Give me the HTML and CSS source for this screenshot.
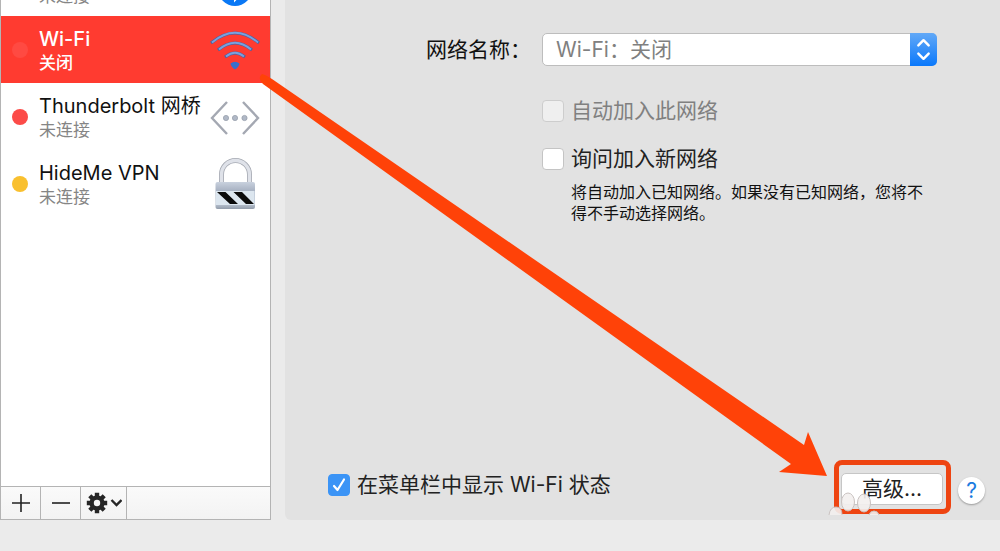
FILE: index.html
```html
<!DOCTYPE html>
<html lang="zh-CN">

<head>
    <meta charset="UTF-8" />
    <meta name="viewport" content="width=device-width, initial-scale=1.0" />
    <title>网络</title>
    <link rel="stylesheet" href="styles.css">
</head>

<body>
    <div class="network">
        <aside class="sidebar">
            <div class="services">
                <ul class="list">
                    <li class="service">
                        <span class="dot red"></span>
                        <div class="info">
                            <div class="name">蓝牙 PAN</div>
                            <div class="status">未连接</div>
                        </div>
                        <svg class="icon" viewBox="0 0 52 52">
                            <circle cx="26" cy="32" r="17" fill="#0a78f5" />
                            <path d="M20 26l12 11-6 6V21l6 6-12 11" fill="none" stroke="#fff" stroke-width="2" />
                        </svg>
                    </li>
                    <li class="service active">
                        <span class="dot off"></span>
                        <div class="info">
                            <div class="name">Wi-Fi</div>
                            <div class="status">关闭</div>
                        </div>
                        <svg class="icon" viewBox="0 0 52 52">
                            <g fill="none" stroke="#4a64a4" stroke-width="3">
                                <path d="M2 19Q26 -1 50 19" />
                                <path d="M9 26Q26 12 43 26" />
                                <path d="M16 33Q26 25 36 33" />
                            </g>
                            <g fill="none" stroke="#7ba0dc" stroke-width="1.8">
                                <path d="M3 18.500Q26 -1 49 18.500" />
                                <path d="M10 25.500Q26 12 42 25.500" />
                                <path d="M17 32.500Q26 25 35 32.500" />
                            </g>
                            <path d="M21.500 39.500Q26 36 30.500 39.500Q30 43 26 45.500Q22 43 21.500 39.500z" fill="#3a6fcb" />
                        </svg>
                    </li>
                    <li class="service">
                        <span class="dot red"></span>
                        <div class="info">
                            <div class="name">Thunderbolt 网桥</div>
                            <div class="status">未连接</div>
                        </div>
                        <svg class="icon" viewBox="0 0 52 52">
                            <g fill="none" stroke="#a4a8b2" stroke-width="2.4">
                                <path d="M18 11L3 27L18 43" />
                                <path d="M34 11L49 27L34 43" />
                            </g>
                            <g fill="#b0b8c6" stroke="#989fac" stroke-width=".8">
                                <circle cx="17" cy="27" r="2.6" />
                                <circle cx="26" cy="27" r="2.6" />
                                <circle cx="35.500" cy="27" r="2.6" />
                            </g>
                        </svg>
                    </li>
                    <li class="service">
                        <span class="dot yellow"></span>
                        <div class="info">
                            <div class="name">HideMe VPN</div>
                            <div class="status">未连接</div>
                        </div>
                        <svg class="icon" viewBox="0 0 52 52">
                            <defs>
                                <linearGradient id="lock" x1="0" y1="0" x2="0" y2="1">
                                    <stop offset="0" stop-color="#c9d1de" />
                                    <stop offset=".3" stop-color="#aab4c4" />
                                    <stop offset=".8" stop-color="#bcc6d3" />
                                    <stop offset="1" stop-color="#929cab" />
                                </linearGradient>
                            </defs>
                            <path d="M12.500 25V16.500A14 14 0 0 1 40.500 16.500V25" fill="none" stroke="#a5a9b2" stroke-width="5" />
                            <path d="M12.500 25V16.500A14 14 0 0 1 40.500 16.500V25" fill="none" stroke="#dfe2e9" stroke-width="3.400" />
                            <rect x="6.500" y="24" width="39.500" height="27" rx="2" fill="url(#lock)" />
                            <rect x="7" y="33" width="38.500" height="14" fill="#dce6ef" />
                            <path d="M8 34H16.500L29 46H21zM24.500 34H33L45 46H37z" fill="#0b0b0b" />
                        </svg>
                    </li>
                </ul>
            </div>
            <div class="toolbar">
                <button class="tool" type="button" aria-label="添加">
                    <svg width="18" height="18" viewBox="0 0 18 18">
                        <path d="M9 0V18M0 9H18" stroke="#222" stroke-width="1.6" />
                    </svg>
                </button>
                <button class="tool" type="button" aria-label="移除">
                    <svg width="18" height="18" viewBox="0 0 18 18">
                        <path d="M0 9H18" stroke="#222" stroke-width="1.6" />
                    </svg>
                </button>
                <button class="tool wide" type="button" aria-label="操作">
                    <svg width="36" height="22" viewBox="0 0 36 22">
                        <g stroke="#262626" stroke-width="4.400">
                            <path d="M11 .8V21.200M.8 11H21.200M3.800 3.800L18.200 18.200M18.200 3.800L3.800 18.200" />
                        </g>
                        <circle cx="11" cy="11" r="7.600" fill="#262626" />
                        <circle cx="11" cy="11" r="3.200" fill="#f7f7f7" />
                        <path d="M25.500 8L30.500 13L35.500 8" fill="none" stroke="#262626" stroke-width="2.400" />
                    </svg>
                </button>
            </div>
        </aside>

        <main class="panel">
            <div class="form">
                <label class="label" for="ssid">网络名称：</label>
                <div class="popup">
                    <select id="ssid" disabled>
                        <option>Wi-Fi：关闭</option>
                    </select>
                    <svg class="cap" viewBox="0 0 26 32">
                        <g fill="none" stroke="#fff" stroke-width="2.400" stroke-linecap="round" stroke-linejoin="round">
                            <path d="M8 12L13 7L18 12" />
                            <path d="M8 20L13 25L18 20" />
                        </g>
                    </svg>
                </div>
                <div class="options">
                    <label class="check disabled"><input type="checkbox" disabled>自动加入此网络</label>
                    <label class="check"><input type="checkbox">询问加入新网络</label>
                    <p class="note">将自动加入已知网络。如果没有已知网络，您将不得不手动选择网络。</p>
                </div>
            </div>

            <div class="footer">
                <label class="check"><input type="checkbox" checked>在菜单栏中显示 Wi-Fi 状态</label>
                <div class="highlight">
                    <button class="advanced" type="button">高级...</button>
                    <svg class="paw" viewBox="0 0 52 24">
                        <g fill="#f3efee" fill-opacity=".9" stroke="#c9c2c0" stroke-width="1">
                            <ellipse cx="20" cy="11" rx="6.500" ry="9" />
                            <ellipse cx="36" cy="12" rx="6.500" ry="9" />
                            <path d="M1 24Q2 16 8 16T14 24" />
                            <path d="M41 24Q42 20 46 20T51 24" />
                        </g>
                    </svg>
                </div>
                <button class="help" type="button" aria-label="帮助">?</button>
            </div>
        </main>

        <!-- 箭头 -->
        <svg class="arrow" width="1000" height="551" viewBox="0 0 1000 551">
            <path d="M262 74Q266 75 272 79L804 445L808 432L827 476L779 472L791 464L263 84Q257 78 262 74z" fill="#ff4208" />
        </svg>
    </div>
</body>

</html>
```

FILE: styles.css
```css
* {
    margin: 0;
    padding: 0;
    box-sizing: border-box;
}

body {
    background-color: #ebebeb;
    font: 21px/30px Inter, "Noto Sans CJK SC", sans-serif;
    color: #222;
    overflow: hidden;
}

button,
select {
    font: inherit;
    color: inherit;
}

.network {
    position: relative;
    display: flex;
    gap: 14px;
    min-height: 100vh;
    padding-bottom: 31px;
}

/* 左侧服务列表 */
.sidebar {
    display: flex;
    flex-direction: column;
    width: 271px;
    border: 1px solid #b4b4b4;
    border-top: 0;
    background-color: white;
}

.services {
    flex: 1;
    overflow: hidden;
}

.list {
    margin-top: -51px;
    list-style: none;
}

.service {
    display: flex;
    align-items: center;
    height: 67px;
    padding: 0 9px 0 11px;
}

.service.active {
    background-color: #ff3b30;
    color: white;
}

.dot {
    width: 16px;
    height: 16px;
    margin-right: 11px;
    border-radius: 50%;
}

.dot.red {
    background-color: #fc4b48;
}

.dot.yellow {
    background-color: #f9c02f;
}

.dot.off {
    background-color: #ff4a42;
}

.info {
    flex: 1;
    padding-top: 2px;
    white-space: nowrap;
}

.name {
    font-size: 20px;
    line-height: 25px;
    color: #111;
}

.status {
    font-size: 17px;
    line-height: 22px;
    color: #858585;
}

.active .name,
.active .status {
    color: white;
    font-weight: 500;
}

.icon {
    width: 52px;
    height: 52px;
}

.toolbar {
    display: flex;
    height: 33px;
    border-top: 1px solid #b4b4b4;
    background: linear-gradient(#fafafa, #f3f3f3);
}

.tool {
    display: flex;
    align-items: center;
    justify-content: center;
    width: 40px;
    border: 0;
    border-right: 1px solid #b4b4b4;
    background: none;
}

.tool.wide {
    width: 46px;
}

/* 右侧面板 */
.panel {
    flex: 1;
    display: flex;
    flex-direction: column;
    justify-content: space-between;
    padding: 33px 15px 6px 0;
    border-radius: 0 0 0 6px;
    background-color: #e2e2e2;
}

.form {
    display: grid;
    grid-template-columns: 246px 1fr;
    column-gap: 11px;
    row-gap: 30px;
    padding-right: 48px;
}

.label {
    line-height: 33px;
    text-align: right;
    color: #111;
}

.popup {
    position: relative;
    display: flex;
}

.popup select {
    flex: 1;
    height: 33px;
    padding-left: 13px;
    border: 1px solid #bdbdbd;
    border-radius: 5px;
    background-color: white;
    color: #808080;
    opacity: 1;
    appearance: none;
}

.cap {
    position: absolute;
    top: 0;
    right: 0;
    width: 27px;
    height: 33px;
    border-radius: 0 5px 5px 0;
    background: linear-gradient(#62a9f7, #0a78fb);
    pointer-events: none;
}

.options {
    grid-column: 2;
    display: grid;
    row-gap: 18px;
}

.check {
    display: flex;
    align-items: center;
    gap: 7px;
}

.check.disabled {
    color: #808080;
}

.check input {
    width: 22px;
    height: 22px;
    border: 1px solid #c4c4c4;
    border-radius: 4px;
    background-color: white;
    appearance: none;
}

.check input:disabled {
    border-color: #cdcdcd;
    background-color: #efefef;
}

.check input:checked {
    border-color: #3b94f6;
    background: #3b94f6 url("data:image/svg+xml,%3Csvg xmlns='http://www.w3.org/2000/svg' viewBox='0 0 20 20'%3E%3Cpath d='M5 11l3.500 4L15 4.500' fill='none' stroke='white' stroke-width='2.200' stroke-linecap='round' stroke-linejoin='round'/%3E%3C/svg%3E") center / 20px no-repeat;
}

.note {
    margin-top: -10px;
    padding-left: 29px;
    font-size: 16px;
    line-height: 21px;
    color: #111;
}

.footer {
    display: flex;
    align-items: flex-end;
    padding-left: 43px;
}

.footer .check {
    margin: 0 auto 14px 0;
}

.highlight {
    position: relative;
    padding: 8px 3px 4px 2px;
    border: 5px solid #ee4411;
    border-radius: 8px;
}

.advanced {
    display: block;
    width: 102px;
    height: 32px;
    border: 1px solid #c6c6c6;
    border-radius: 5px;
    background-color: white;
}

.paw {
    position: absolute;
    left: -11px;
    bottom: -6px;
    width: 52px;
    height: 24px;
}

.help {
    width: 27px;
    height: 27px;
    margin: 0 0 10px 7px;
    border: 0;
    border-radius: 50%;
    background-color: white;
    box-shadow: 0 1px 2px #999;
    line-height: 27px;
    color: #1b7be0;
}

.arrow {
    position: absolute;
    top: 0;
    left: 0;
    pointer-events: none;
}
```
